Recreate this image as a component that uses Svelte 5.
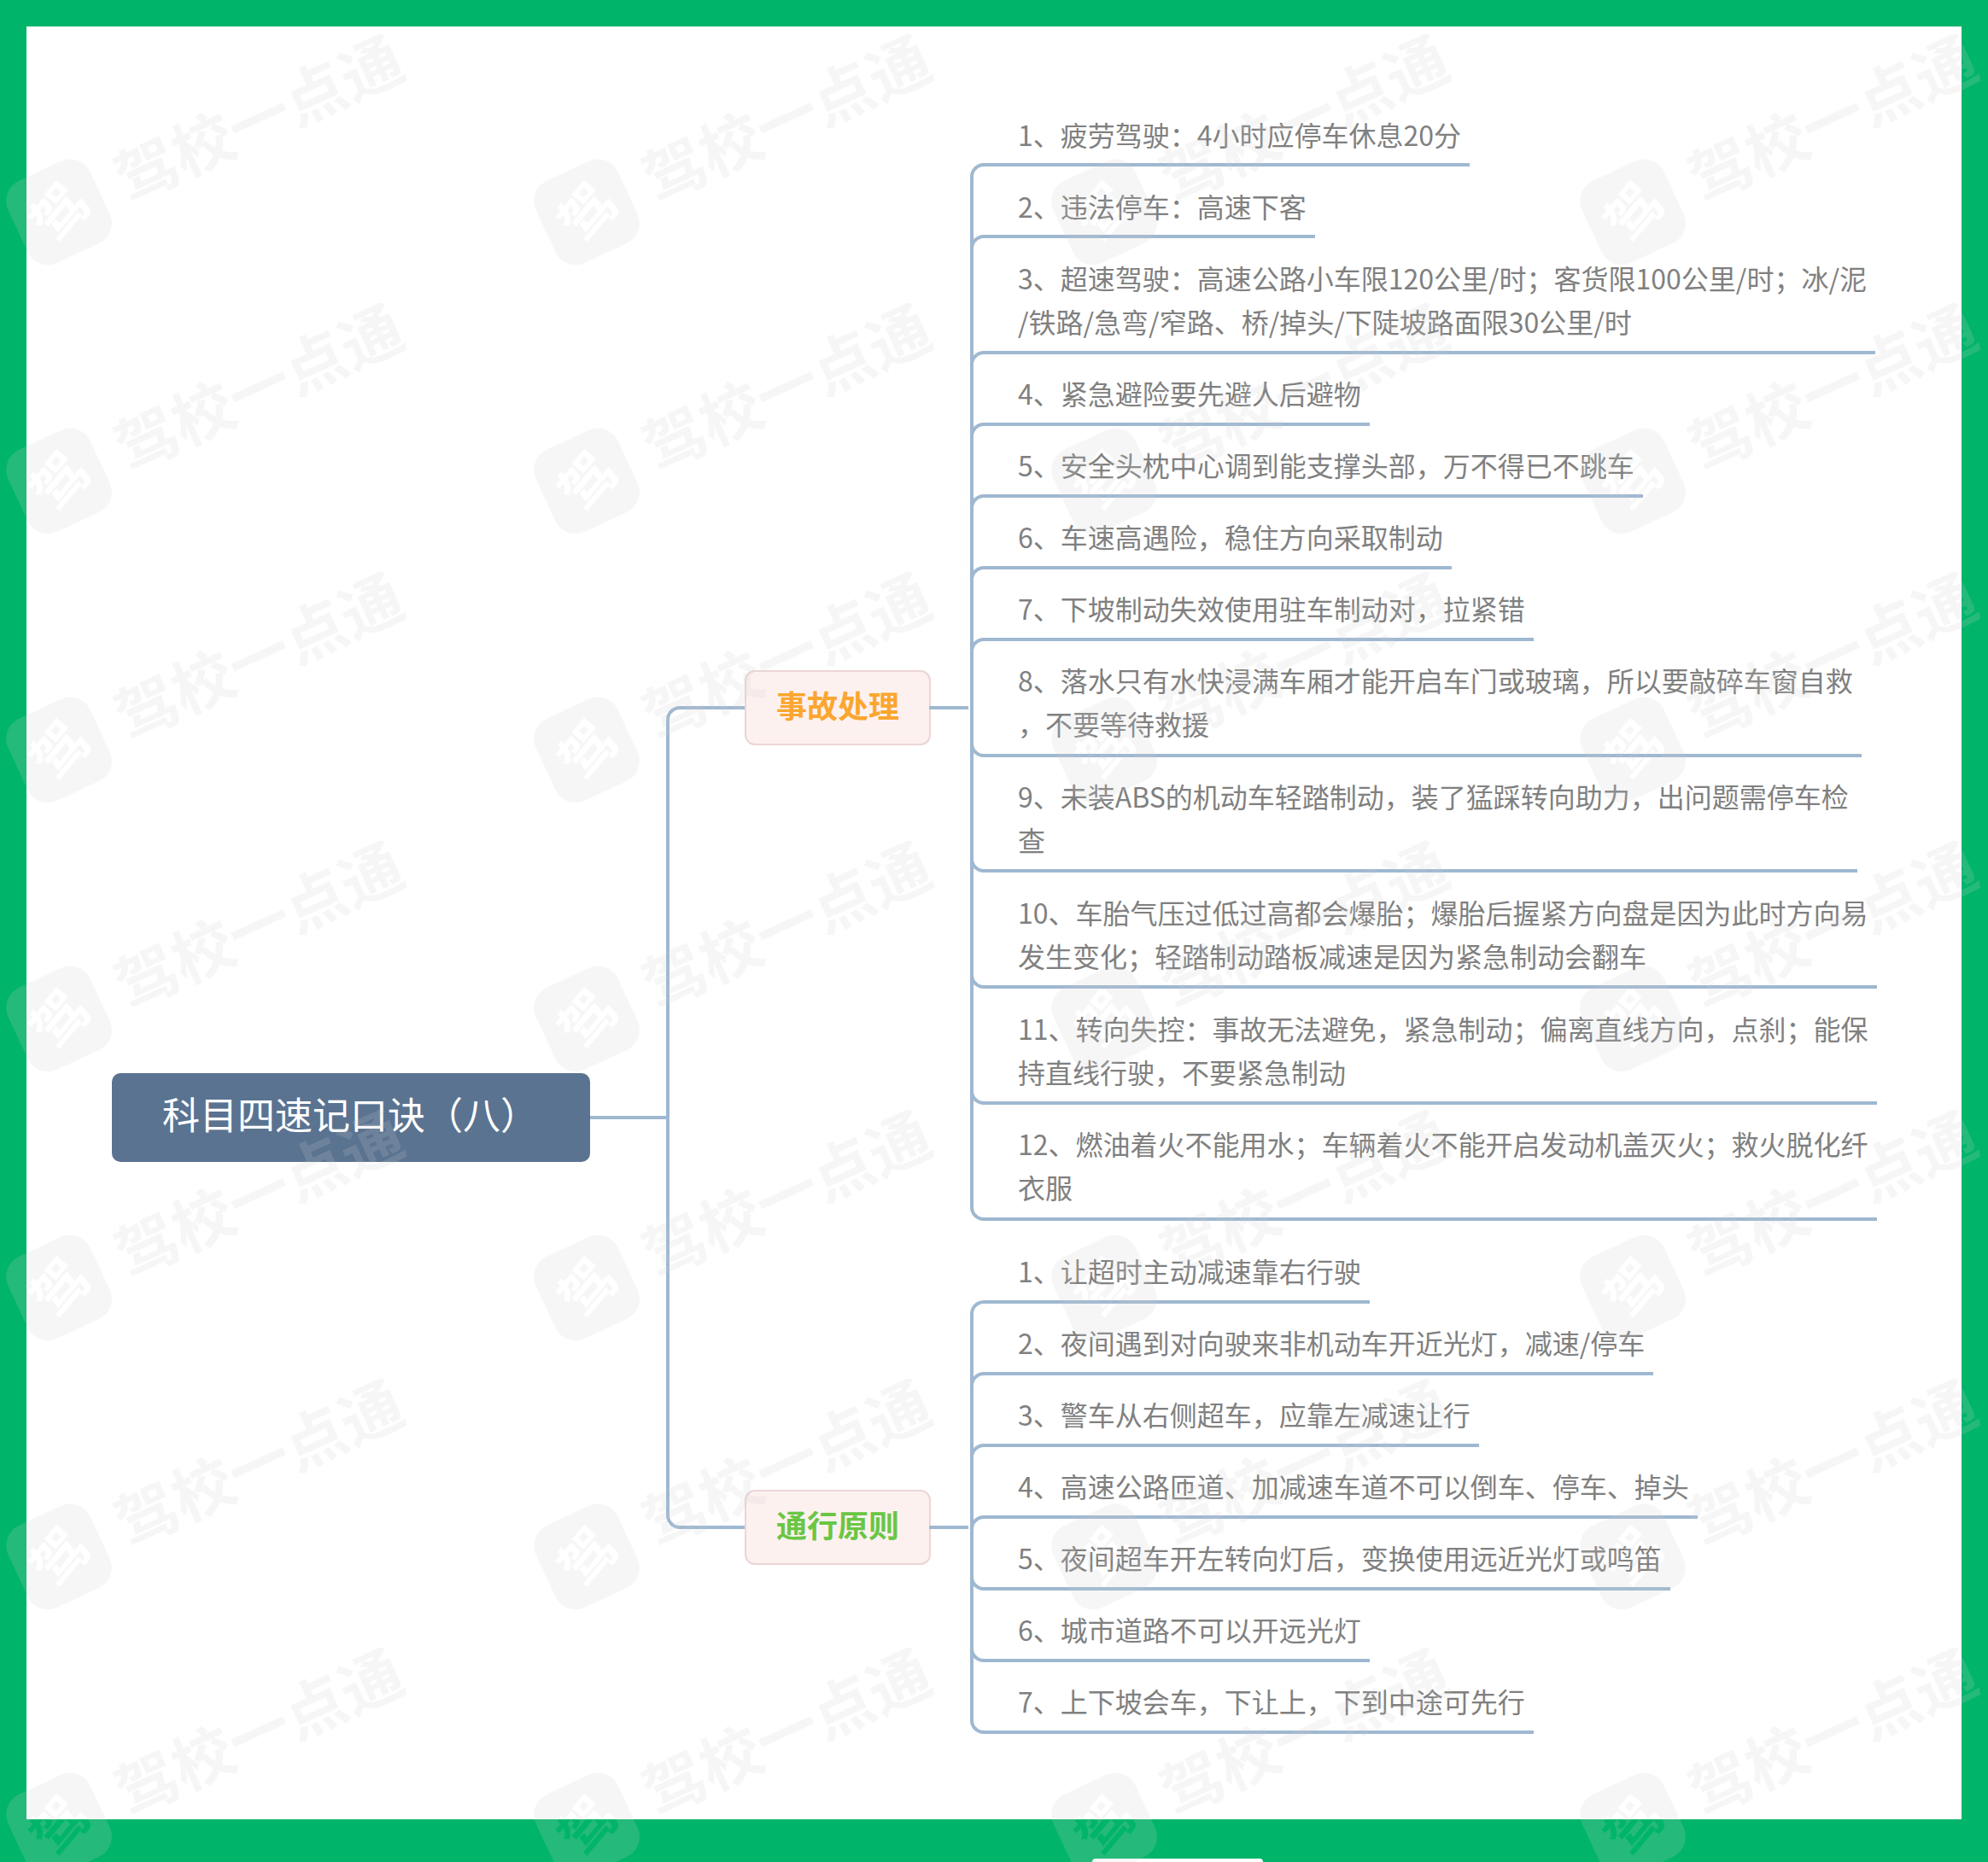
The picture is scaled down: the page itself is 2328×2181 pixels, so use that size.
<script>
  const groups = [
    {
      title: '事故处理',
      tone: 'orange',
      offset: 674,
      items: [
        { up: true, lines: ['1、疲劳驾驶：4小时应停车休息20分'] },
        { up: true, lines: ['2、违法停车：高速下客'] },
        { up: true, lines: ['3、超速驾驶：高速公路小车限120公里/时；客货限100公里/时；冰/泥', '/铁路/急弯/窄路、桥/掉头/下陡坡路面限30公里/时'] },
        { up: true, lines: ['4、紧急避险要先避人后避物'] },
        { up: true, lines: ['5、安全头枕中心调到能支撑头部，万不得已不跳车'] },
        { up: true, lines: ['6、车速高遇险，稳住方向采取制动'] },
        { up: true, lines: ['7、下坡制动失效使用驻车制动对，拉紧错'] },
        { up: false, lines: ['8、落水只有水快浸满车厢才能开启车门或玻璃，所以要敲碎车窗自救', '，不要等待救援'] },
        { up: false, lines: ['9、未装ABS的机动车轻踏制动，装了猛踩转向助力，出问题需停车检', '查'] },
        { up: false, lines: ['10、车胎气压过低过高都会爆胎；爆胎后握紧方向盘是因为此时方向易', '发生变化；轻踏制动踏板减速是因为紧急制动会翻车'] },
        { up: false, lines: ['11、转向失控：事故无法避免，紧急制动；偏离直线方向，点刹；能保', '持直线行驶，不要紧急制动'] },
        { up: false, lines: ['12、燃油着火不能用水；车辆着火不能开启发动机盖灭火；救火脱化纤', '衣服'] }
      ]
    },
    {
      title: '通行原则',
      tone: 'green',
      offset: 302,
      items: [
        { up: true, lines: ['1、让超时主动减速靠右行驶'] },
        { up: true, lines: ['2、夜间遇到对向驶来非机动车开近光灯，减速/停车'] },
        { up: true, lines: ['3、警车从右侧超车，应靠左减速让行'] },
        { up: true, lines: ['4、高速公路匝道、加减速车道不可以倒车、停车、掉头'] },
        { up: false, lines: ['5、夜间超车开左转向灯后，变换使用远近光灯或鸣笛'] },
        { up: false, lines: ['6、城市道路不可以开远光灯'] },
        { up: false, lines: ['7、上下坡会车，下让上，下到中途可先行'] }
      ]
    }
  ]

  // watermark tiles repeat across the whole picture
  const tiles = []
  for (let r = 0; r < 7; r++) {
    for (const x of [0, 618, 1224, 1843]) {
      tiles.push({ x, y: 20 + r * 315 })
    }
  }
</script>

<div class="page">
  <div class="sheet">
    <div class="root">科目四速记口诀（八）</div>
    <div class="groups">
      <div class="trunk"></div>
      {#each groups as g}
        <div class="group">
          <div class="branch {g.tone}" style="margin-top: {g.offset}px">{g.title}</div>
          <div class="leaves">
            {#each g.items as item}
              <div class="leaf" class:up={item.up} class:down={!item.up}>
                {#each item.lines as line}
                  <div class="line">{line}</div>
                {/each}
              </div>
            {/each}
          </div>
        </div>
      {/each}
    </div>
  </div>

  <div class="tab"></div>

  <svg class="watermark" width="2328" height="2181" viewBox="0 0 2328 2181" aria-hidden="true">
    <defs>
      <mask id="knock" maskUnits="userSpaceOnUse" x="-20" y="140" width="200" height="180">
        <rect x="-20" y="140" width="200" height="180" fill="#fff" />
        <text x="70" y="252" transform="rotate(-25 70 228)" text-anchor="middle" class="wm-char" fill="#000">驾</text>
      </mask>
      <g id="wm">
        <rect x="16" y="175" width="106" height="106" rx="26" transform="rotate(-25 70 228)" mask="url(#knock)" />
        <text x="304" y="146" transform="rotate(-24.5 304 121)" text-anchor="middle" class="wm-text">驾校一点通</text>
      </g>
    </defs>
    {#each tiles as t}
      <use href="#wm" x={t.x} y={t.y} />
    {/each}
  </svg>
</div>

<style>
  :global(body) {
    margin: 0;
  }

  .page {
    position: relative;
    box-sizing: border-box;
    width: 2328px;
    height: 2181px;
    padding: 31px;
    background: #00b56a;
    overflow: hidden;
    font-family: "Noto Sans CJK SC", "Noto Sans", sans-serif;
  }

  .sheet {
    display: flex;
    align-items: flex-start;
    height: 2100px;
    padding-top: 80px;
    box-sizing: border-box;
    background: #fff;
  }

  .root {
    position: relative;
    box-sizing: border-box;
    flex: none;
    width: 560px;
    height: 104px;
    margin: 1146px 0 0 100px;
    padding-left: 59px;
    border-radius: 10px;
    background: #5a7391;
    color: #fff;
    font-size: 44px;
    line-height: 94px;
  }

  .root::after {
    content: '';
    position: absolute;
    left: 100%;
    top: 50px;
    width: 90px;
    height: 4px;
    background: #9fb8d1;
  }

  .groups {
    position: relative;
    display: flex;
    flex-direction: column;
    gap: 13px;
    margin-left: 181px;
  }

  .trunk {
    position: absolute;
    left: -92px;
    top: 716px;
    box-sizing: border-box;
    width: 92px;
    height: 964px;
    border: 4px solid #9fb8d1;
    border-right: 0;
    border-radius: 16px 0 0 16px;
  }

  .group {
    display: flex;
    align-items: flex-start;
  }

  .branch {
    position: relative;
    box-sizing: border-box;
    flex: none;
    width: 218px;
    height: 88px;
    margin-right: 46px;
    border: 2px solid #ecd5d6;
    border-radius: 12px;
    background: #fdf1f0;
    font-size: 36px;
    font-weight: 700;
    line-height: 77px;
    text-align: center;
  }

  .branch::after {
    content: '';
    position: absolute;
    left: 100%;
    top: 40px;
    width: 46px;
    height: 4px;
    background: #9fb8d1;
  }

  .orange {
    color: #fba62f;
  }

  .green {
    color: #6ac644;
  }

  .leaves {
    position: relative;
  }

  .leaves::before {
    content: '';
    position: absolute;
    left: 0;
    top: 96px;
    bottom: 16px;
    width: 4px;
    background: #9fb8d1;
  }

  .leaf {
    position: relative;
    width: fit-content;
    margin-left: 16px;
    padding: 20.5px 10px 8.5px 40px;
    border-bottom: 4px solid #9fb8d1;
    color: #808080;
    font-size: 32px;
    line-height: 51px;
    white-space: nowrap;
  }

  .line + .line {
    margin-bottom: 0.8px;
  }

  .leaf::before {
    content: '';
    position: absolute;
    left: -16px;
    box-sizing: border-box;
    width: 16px;
    height: 16px;
  }

  .leaf.up::before {
    top: 100%;
    border-top: 4px solid #9fb8d1;
    border-left: 4px solid #9fb8d1;
    border-top-left-radius: 16px;
  }

  .leaf.down::before {
    bottom: -4px;
    border-bottom: 4px solid #9fb8d1;
    border-left: 4px solid #9fb8d1;
    border-bottom-left-radius: 16px;
  }

  .tab {
    position: absolute;
    left: 1279px;
    bottom: 0;
    width: 200px;
    height: 4px;
    border-radius: 14px 14px 0 0;
    background: #fff;
  }

  .watermark {
    position: absolute;
    left: 0;
    top: 0;
    pointer-events: none;
    fill: rgba(204, 204, 204, 0.18);
  }

  .wm-text {
    font-family: "Noto Sans CJK SC", sans-serif;
    font-size: 72px;
    font-weight: 700;
  }

  .wm-char {
    font-family: "Noto Sans CJK SC", sans-serif;
    font-size: 64px;
    font-weight: 700;
  }
</style>
